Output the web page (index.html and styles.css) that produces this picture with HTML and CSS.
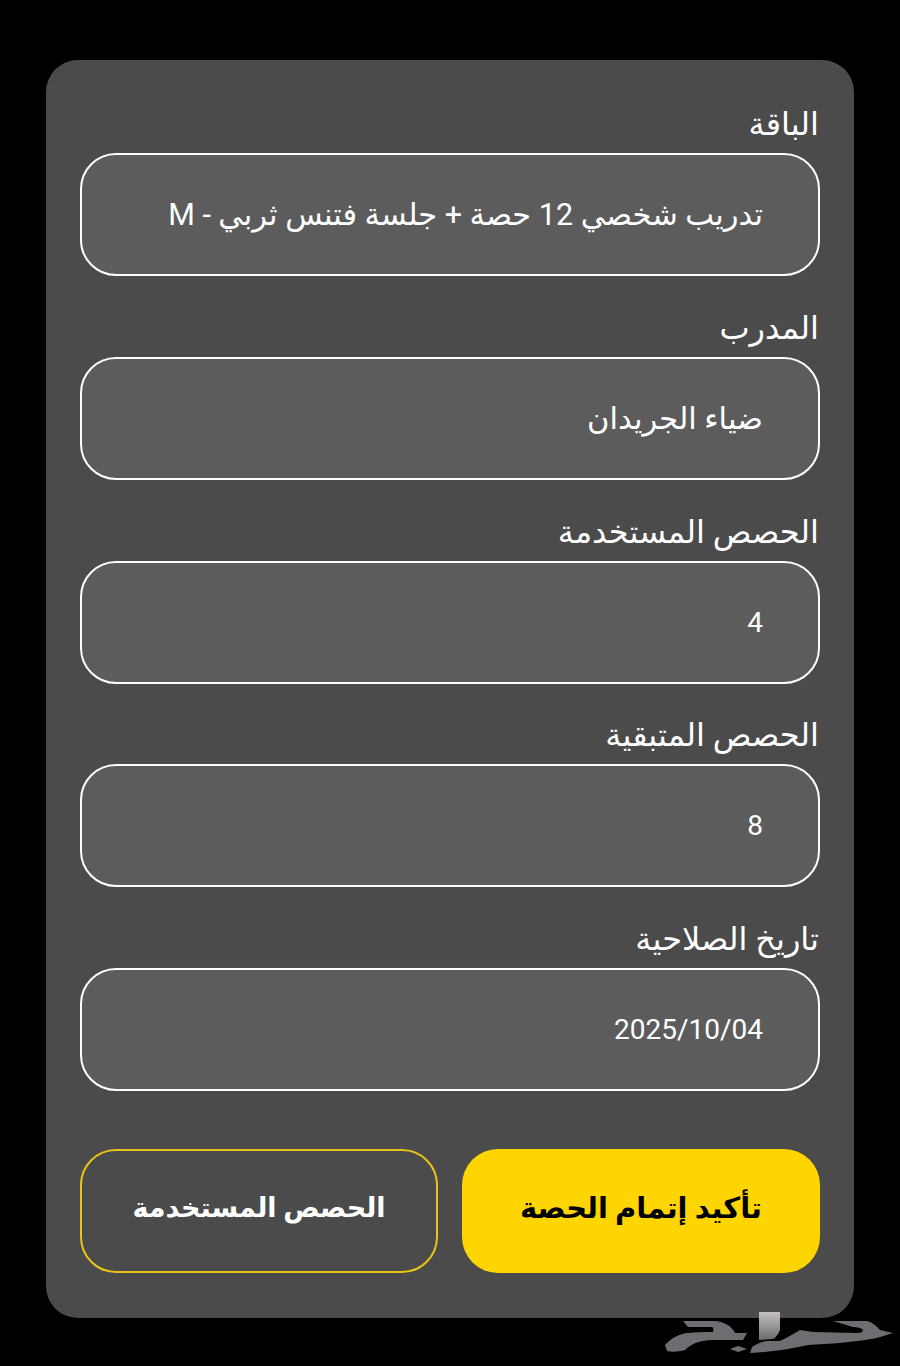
FILE: index.html
```html
<!DOCTYPE html>
<html lang="ar" dir="rtl">
<head>
  <meta charset="UTF-8">
  <title>تفاصيل الباقة</title>
  <link rel="stylesheet" href="styles.css">
</head>
<body>
  <div class="card">
    <div class="field">
      <div class="field-label">الباقة</div>
      <div class="field-box">تدريب شخصي 12 حصة + جلسة فتنس ثربي - M</div>
    </div>
    <div class="field">
      <div class="field-label">المدرب</div>
      <div class="field-box">ضياء الجريدان</div>
    </div>
    <div class="field">
      <div class="field-label">الحصص المستخدمة</div>
      <div class="field-box field-num">4</div>
    </div>
    <div class="field">
      <div class="field-label">الحصص المتبقية</div>
      <div class="field-box field-num">8</div>
    </div>
    <div class="field">
      <div class="field-label">تاريخ الصلاحية</div>
      <div class="field-box field-num">2025/10/04</div>
    </div>
    <div class="actions">
      <button class="btn btn-primary">تأكيد إتمام الحصة</button>
      <button class="btn btn-outline">الحصص المستخدمة</button>
    </div>
  </div>

  <!-- watermark -->
  <svg class="watermark" width="232" height="50" viewBox="0 0 232 50">
    <defs>
      <linearGradient id="alef" x1="0" y1="0" x2="0" y2="1">
        <stop offset="0" stop-color="#c4bfc0"/>
        <stop offset="1" stop-color="#6e6c70"/>
      </linearGradient>
    </defs>
    <path fill="#6f6d72" d="M19 10 L51 10 C62 11 68 16 71 22 L83 22 L79 29 L46 29 C36 30 28 32 21 39 C14 41 8 41 3 40 L1 34 C8 26 16 23 23 22 C32 21 42 21 49 21 C50 18 49 16 48 16 L24 16 Z"/>
    <path fill="url(#alef)" d="M95 1 L116 1 L116 19 C114 24 111 27 109 28 L95 29 Z"/>
    <path fill="#6f6d72" d="M88 36 C93 33 98 30 104 30 L116 30 L124 26 L136 19 L149 21 L193 22 C197 22 199 21 199 19 C198 17 193 16 189 16 L169 10 L203 10 C210 12 213 16 216 19 L229 22 L213 27 C190 31 165 33 144 34 C130 37 110 41 86 42 Z"/>
    <path fill="#6f6d72" d="M66 38 L74 35 L83 38 L74 41 Z"/>
  </svg>
</body>
</html>
```

FILE: styles.css
```css
html, body { margin: 0; padding: 0; }
body { background: #000; width: 900px; height: 1366px; position: relative; overflow: hidden; font-family: Roboto, "DejaVu Sans", sans-serif; color: #fff; padding-top: 60px; box-sizing: border-box; }
.card { width: 808px; height: 1258px; margin: 0 46px; box-sizing: border-box; background: #4b4b4b; border-radius: 32px; padding: 44px 34px 45px; display: flex; flex-direction: column; }
.field { display: flex; flex-direction: column; margin-bottom: 31.75px; }
.field-label { height: 49px; line-height: 40px; font-size: 32px; padding: 0 1px; }
.field-box { height: 123px; box-sizing: border-box; border: 2px solid #fff; border-radius: 36px; background: #5c5c5c; display: flex; align-items: center; padding: 0 55px; font-size: 30.5px; }
.field-num { font-size: 28px; }
.actions { display: grid; grid-template-columns: 1fr 1fr; gap: 24px; margin-top: 26px; }
.btn { height: 124px; box-sizing: border-box; border-radius: 36px; font-family: inherit; font-weight: bold; padding: 0 0 6px; }
.btn-primary { background: #ffd500; border: 0; color: #000; font-size: 29px; }
.btn-outline { background: transparent; border: 2px solid #e8c41a; color: #fff; font-size: 27px; }
.watermark { position: absolute; left: 664px; top: 1311px; }
```
